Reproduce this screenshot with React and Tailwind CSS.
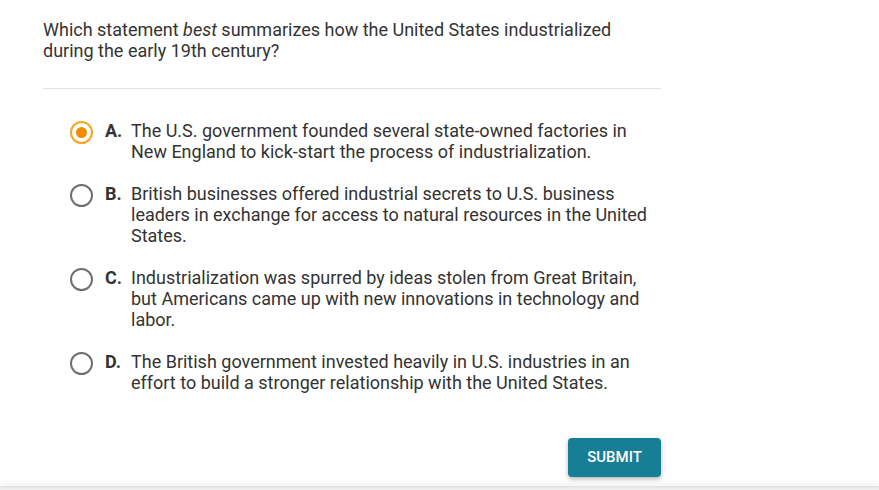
const options = [
  {
    letter: "A.",
    text: "The U.S. government founded several state-owned factories in New England to kick-start the process of industrialization.",
    selected: true,
  },
  {
    letter: "B.",
    text: "British businesses offered industrial secrets to U.S. business leaders in exchange for access to natural resources in the United States.",
  },
  {
    letter: "C.",
    text: "Industrialization was spurred by ideas stolen from Great Britain, but Americans came up with new innovations in technology and labor.",
  },
  {
    letter: "D.",
    text: "The British government invested heavily in U.S. industries in an effort to build a stronger relationship with the United States.",
  },
];

function Radio({ selected }) {
  if (selected) {
    return (
      <span className="mt-[1px] flex h-[23px] w-[23px] shrink-0 items-center justify-center rounded-full border-2 border-[#f5a623]">
        <span className="h-[11px] w-[11px] rounded-full bg-[#f28c00]" />
      </span>
    );
  }
  return <span className="mt-[1px] h-[23px] w-[23px] shrink-0 rounded-full border-2 border-[#6f6f6f]" />;
}

export default function App() {
  return (
    <div className="relative h-[490px] w-[879px] overflow-hidden bg-white font-['Roboto',sans-serif] text-[#333]">
      <div className="w-[661px] pl-[43px] pt-[19px]">
        <p className="text-[18px] leading-[21px]">
          Which statement <em>best</em> summarizes how the United States industrialized during the early 19th century?
        </p>
        <div className="mt-[27px] h-px bg-[#e3e3e3]" />
        <div className="flex flex-col gap-[21px] pt-[31px]">
          {options.map((o) => (
            <div key={o.letter} className="flex items-start pl-[27px]">
              <Radio selected={o.selected} />
              <div className="ml-[12px] flex text-[18px] leading-[21px]">
                <span className="w-[26px] shrink-0 font-bold">{o.letter}</span>
                <span className="pr-[10px]">{o.text}</span>
              </div>
            </div>
          ))}
        </div>
        <div className="mt-[45px] flex justify-end">
          <button className="h-[39px] w-[93px] rounded-[4px] bg-[#177f95] text-[15px] font-medium text-white shadow-[0_2px_4px_rgba(0,0,0,0.3)]">
            SUBMIT
          </button>
        </div>
      </div>
      <div className="absolute bottom-0 left-0 h-[4px] w-full bg-gradient-to-b from-[#e0e0e0] to-[#f6f6f6] shadow-[0_-3px_5px_rgba(0,0,0,0.06)]" />
    </div>
  );
}
